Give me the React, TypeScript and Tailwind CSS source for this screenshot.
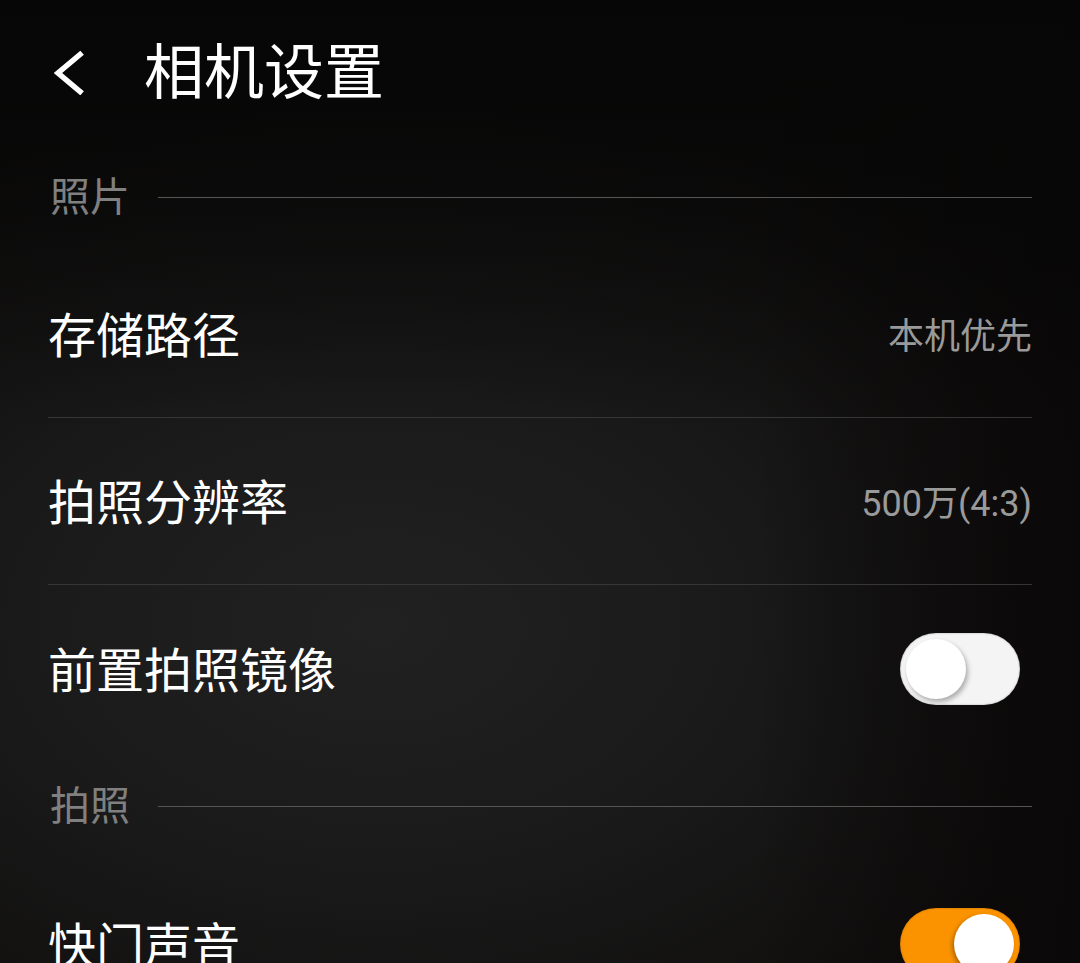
import React from "react";

const font = { fontFamily: 'Roboto, "Noto Sans CJK SC", sans-serif' };

function Toggle({ on }: { on: boolean }) {
  return on ? (
    <div className="relative h-[72px] w-[120px] rounded-full bg-[#fb9300] shadow-[inset_0_0_2px_rgba(0,0,0,0.3)]">
      <div className="absolute right-[6px] top-[6px] h-[60px] w-[60px] rounded-full bg-white shadow-[-2px_2px_4px_rgba(0,0,0,0.3)]" />
    </div>
  ) : (
    <div className="relative h-[72px] w-[120px] rounded-full bg-[#f4f4f4] shadow-[inset_0_0_2px_rgba(0,0,0,0.35)]">
      <div className="absolute left-[6px] top-[6px] h-[60px] w-[60px] rounded-full bg-white shadow-[2px_3px_5px_rgba(0,0,0,0.3)]" />
    </div>
  );
}

function Section({ title }: { title: string }) {
  return (
    <div className="flex h-[108px] items-center">
      <span className="mt-[2px] text-[40px] leading-none text-[#808080]">{title}</span>
      <div className="ml-[28px] h-px flex-1 bg-[#555555]" />
    </div>
  );
}

function Row({ label, value, toggle, divider }: { label: string; value?: string; toggle?: boolean; divider?: boolean }) {
  return (
    <div className={`flex h-[167px] items-center justify-between ${divider ? "border-b border-[#363636]" : ""}`}>
      <span className="mt-[6px] text-[48px] leading-none text-white">{label}</span>
      {value !== undefined && <span className="mt-[6px] text-[36px] leading-none text-[#9a9a9a]">{value}</span>}
      {toggle !== undefined && (
        <div className="mr-[12px]">
          <Toggle on={toggle} />
        </div>
      )}
    </div>
  );
}

export default function App() {
  return (
    <div
      style={font}
      className="h-[963px] w-[1080px] overflow-hidden bg-[linear-gradient(to_bottom,#060606_0%,rgba(6,6,6,0)_45%),linear-gradient(to_right,rgba(10,8,8,0)_70%,#0a0808_100%),radial-gradient(ellipse_75%_55%_at_35%_65%,#212121_0%,#1a1a1a_45%,#0e0c0b_100%)]"
    >
      <div className="flex h-[143px] items-center pb-[2px]">
        <div className="ml-[52px] flex h-[48px] w-[36px] items-center justify-center">
          <svg width="36" height="48" viewBox="0 0 36 48">
            <path d="M28 7.5 L6 26 L28 44.5" fill="none" stroke="white" strokeWidth="5.5" strokeLinecap="square" />
          </svg>
        </div>
        <span className="ml-[56px] mt-[6px] text-[60px] leading-none text-white">相机设置</span>
      </div>
      <div className="pl-[48px] pr-[48px]">
        <div className="pl-[2px]">
          <Section title="照片" />
        </div>
        <Row label="存储路径" value="本机优先" divider />
        <Row label="拍照分辨率" value="500万(4:3)" divider />
        <Row label="前置拍照镜像" toggle={false} />
        <div className="pl-[2px]">
          <Section title="拍照" />
        </div>
        <Row label="快门声音" toggle={true} />
      </div>
    </div>
  );
}
